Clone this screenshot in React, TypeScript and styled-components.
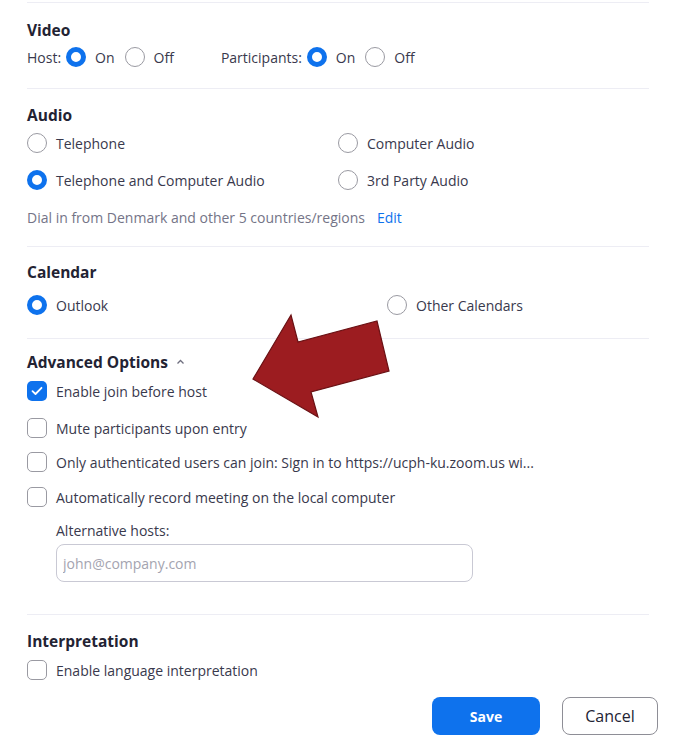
import React from 'react';
import styled, { createGlobalStyle } from 'styled-components';

const GlobalStyle = createGlobalStyle`
  html, body {
    margin: 0;
    padding: 0;
    background: #ffffff;
  }
  body {
    font-family: "Open Sans", "Noto Sans", sans-serif;
    color: #39394d;
  }
`;

const Page = styled.div`
  position: relative;
  width: 686px;
  height: 749px;
  overflow: hidden;
  padding: 2px 0 0 27px;
  box-sizing: border-box;
`;

const Panel = styled.div`
  width: 622px;
`;

const Section = styled.section<{ $top: number; $bottom: number }>`
  border-top: 1px solid #ededf4;
  padding: ${({ $top }) => $top}px 0 ${({ $bottom }) => $bottom}px;
`;

const Title = styled.h3<{ $gap: number }>`
  margin: 0 0 ${({ $gap }) => $gap}px;
  font-size: 15.5px;
  line-height: 22px;
  font-weight: 700;
  color: #232333;
  display: flex;
  align-items: center;
  gap: 8px;
`;

const InlineRow = styled.div`
  display: flex;
  align-items: center;
  height: 26px;
  font-size: 14px;
`;

const Group = styled.div<{ $ml?: number }>`
  display: flex;
  align-items: center;
  margin-left: ${({ $ml }) => $ml ?? 0}px;
`;

const Prefix = styled.span`
  margin-right: 5px;
`;

const Option = styled.label<{ $mr?: number }>`
  display: flex;
  align-items: center;
  gap: 9px;
  height: 26px;
  margin-right: ${({ $mr }) => $mr ?? 0}px;
  font-size: 14px;
  color: #39394d;
  white-space: nowrap;
`;

const Radio = styled.span<{ $on?: boolean }>`
  width: 20px;
  height: 20px;
  box-sizing: border-box;
  border-radius: 50%;
  flex-shrink: 0;
  border: ${({ $on }) => ($on ? '5px solid #0e72ed' : '1.5px solid #9a9aa2')};
  background: #fff;
`;

const Box = styled.span<{ $on?: boolean }>`
  width: 20px;
  height: 20px;
  box-sizing: border-box;
  border-radius: 5px;
  flex-shrink: 0;
  display: flex;
  align-items: center;
  justify-content: center;
  border: ${({ $on }) => ($on ? 'none' : '1.5px solid #9a9aa2')};
  background: ${({ $on }) => ($on ? '#0e72ed' : '#fff')};
`;

const Grid = styled.div<{ $col: number }>`
  display: grid;
  grid-template-columns: ${({ $col }) => $col}px 1fr;
  row-gap: 11px;
`;

const Note = styled.div`
  margin-top: 11px;
  height: 26px;
  display: flex;
  align-items: center;
  font-size: 14px;
  color: #747487;
  gap: 12px;
`;

const Link = styled.a`
  color: #0e72ed;
  text-decoration: none;
`;

const CheckList = styled.div`
  display: flex;
  flex-direction: column;
`;

const CheckRow = styled(Option)<{ $mt?: number }>`
  margin-top: ${({ $mt }) => $mt ?? 0}px;
`;

const Sub = styled.div`
  margin: 10px 0 0 29px;
  display: flex;
  flex-direction: column;
  gap: 2px;
`;

const SubLabel = styled.div`
  font-size: 14px;
  line-height: 22px;
  color: #39394d;
`;

const Input = styled.input`
  width: 417px;
  height: 38px;
  box-sizing: border-box;
  border: 1.5px solid #c9c9d4;
  border-radius: 8px;
  padding: 0 6px;
  font-family: inherit;
  font-size: 14px;
  color: #39394d;
  outline: none;
  &::placeholder {
    color: #a4a4b0;
  }
`;

const Footer = styled.div`
  display: flex;
  justify-content: flex-end;
  gap: 22px;
  width: 631px;
  margin-top: 14px;
`;

const Button = styled.button<{ $primary?: boolean; $w: number }>`
  width: ${({ $w }) => $w}px;
  height: 38px;
  border-radius: 8px;
  font-family: inherit;
  font-size: ${({ $primary }) => ($primary ? '14px' : '16px')};
  font-weight: ${({ $primary }) => ($primary ? 700 : 400)};
  color: ${({ $primary }) => ($primary ? '#ffffff' : '#232333')};
  background: ${({ $primary }) => ($primary ? '#0e72ed' : '#ffffff')};
  border: ${({ $primary }) => ($primary ? 'none' : '1.5px solid #8e8e96')};
  cursor: pointer;
`;

const Arrow = styled.svg`
  position: absolute;
  left: 0;
  top: 0;
  pointer-events: none;
`;

const Check = () => (
  <svg width="12" height="10" viewBox="0 0 12 10">
    <path d="M1.5 5.2 L4.5 8 L10.5 1.8" fill="none" stroke="#fff" strokeWidth="1.8" strokeLinecap="round" strokeLinejoin="round" />
  </svg>
);

const Chevron = () => (
  <svg width="9" height="6" viewBox="0 0 9 6">
    <path d="M1.5 4.5 L4.5 1.5 L7.5 4.5" fill="none" stroke="#6e6e7e" strokeWidth="1.3" />
  </svg>
);

export default function App() {
  return (
    <>
      <GlobalStyle />
      <Page>
        <Panel>
          <Section $top={16} $bottom={18}>
            <Title $gap={3}>Video</Title>
            <InlineRow>
              <Group>
                <Prefix>Host:</Prefix>
                <Option $mr={10}><Radio $on />On</Option>
                <Option><Radio />Off</Option>
              </Group>
              <Group $ml={47}>
                <Prefix>Participants:</Prefix>
                <Option $mr={10}><Radio $on />On</Option>
                <Option><Radio />Off</Option>
              </Group>
            </InlineRow>
          </Section>

          <Section $top={15} $bottom={16}>
            <Title $gap={4}>Audio</Title>
            <Grid $col={311}>
              <Option><Radio />Telephone</Option>
              <Option><Radio />Computer Audio</Option>
              <Option><Radio $on />Telephone and Computer Audio</Option>
              <Option><Radio />3rd Party Audio</Option>
            </Grid>
            <Note>
              Dial in from Denmark and other 5 countries/regions
              <Link href="#">Edit</Link>
            </Note>
          </Section>

          <Section $top={14} $bottom={20}>
            <Title $gap={9}>Calendar</Title>
            <Grid $col={360}>
              <Option><Radio $on />Outlook</Option>
              <Option><Radio />Other Calendars</Option>
            </Grid>
          </Section>

          <Section $top={12} $bottom={32}>
            <Title $gap={5}>
              Advanced Options <Chevron />
            </Title>
            <CheckList>
              <CheckRow><Box $on><Check /></Box>Enable join before host</CheckRow>
              <CheckRow $mt={11}><Box />Mute participants upon entry</CheckRow>
              <CheckRow $mt={8}><Box />Only authenticated users can join: Sign in to https://ucph-ku.zoom.us wi...</CheckRow>
              <CheckRow $mt={9}><Box />Automatically record meeting on the local computer</CheckRow>
            </CheckList>
            <Sub>
              <SubLabel>Alternative hosts:</SubLabel>
              <Input placeholder="john@company.com" />
            </Sub>
          </Section>

          <Section $top={15} $bottom={0}>
            <Title $gap={5}>Interpretation</Title>
            <CheckRow><Box />Enable language interpretation</CheckRow>
          </Section>
        </Panel>

        <Footer>
          <Button $primary $w={108}>Save</Button>
          <Button $w={96}>Cancel</Button>
        </Footer>

        <Arrow width="686" height="749" viewBox="0 0 686 749">
          <polygon
            points="253,379 291,315 298,342 377,321 389,371 311,392 318,417"
            fill="#9c1c20"
            stroke="#6a1114"
            strokeWidth="1.2"
            strokeLinejoin="miter"
          />
        </Arrow>
      </Page>
    </>
  );
}
